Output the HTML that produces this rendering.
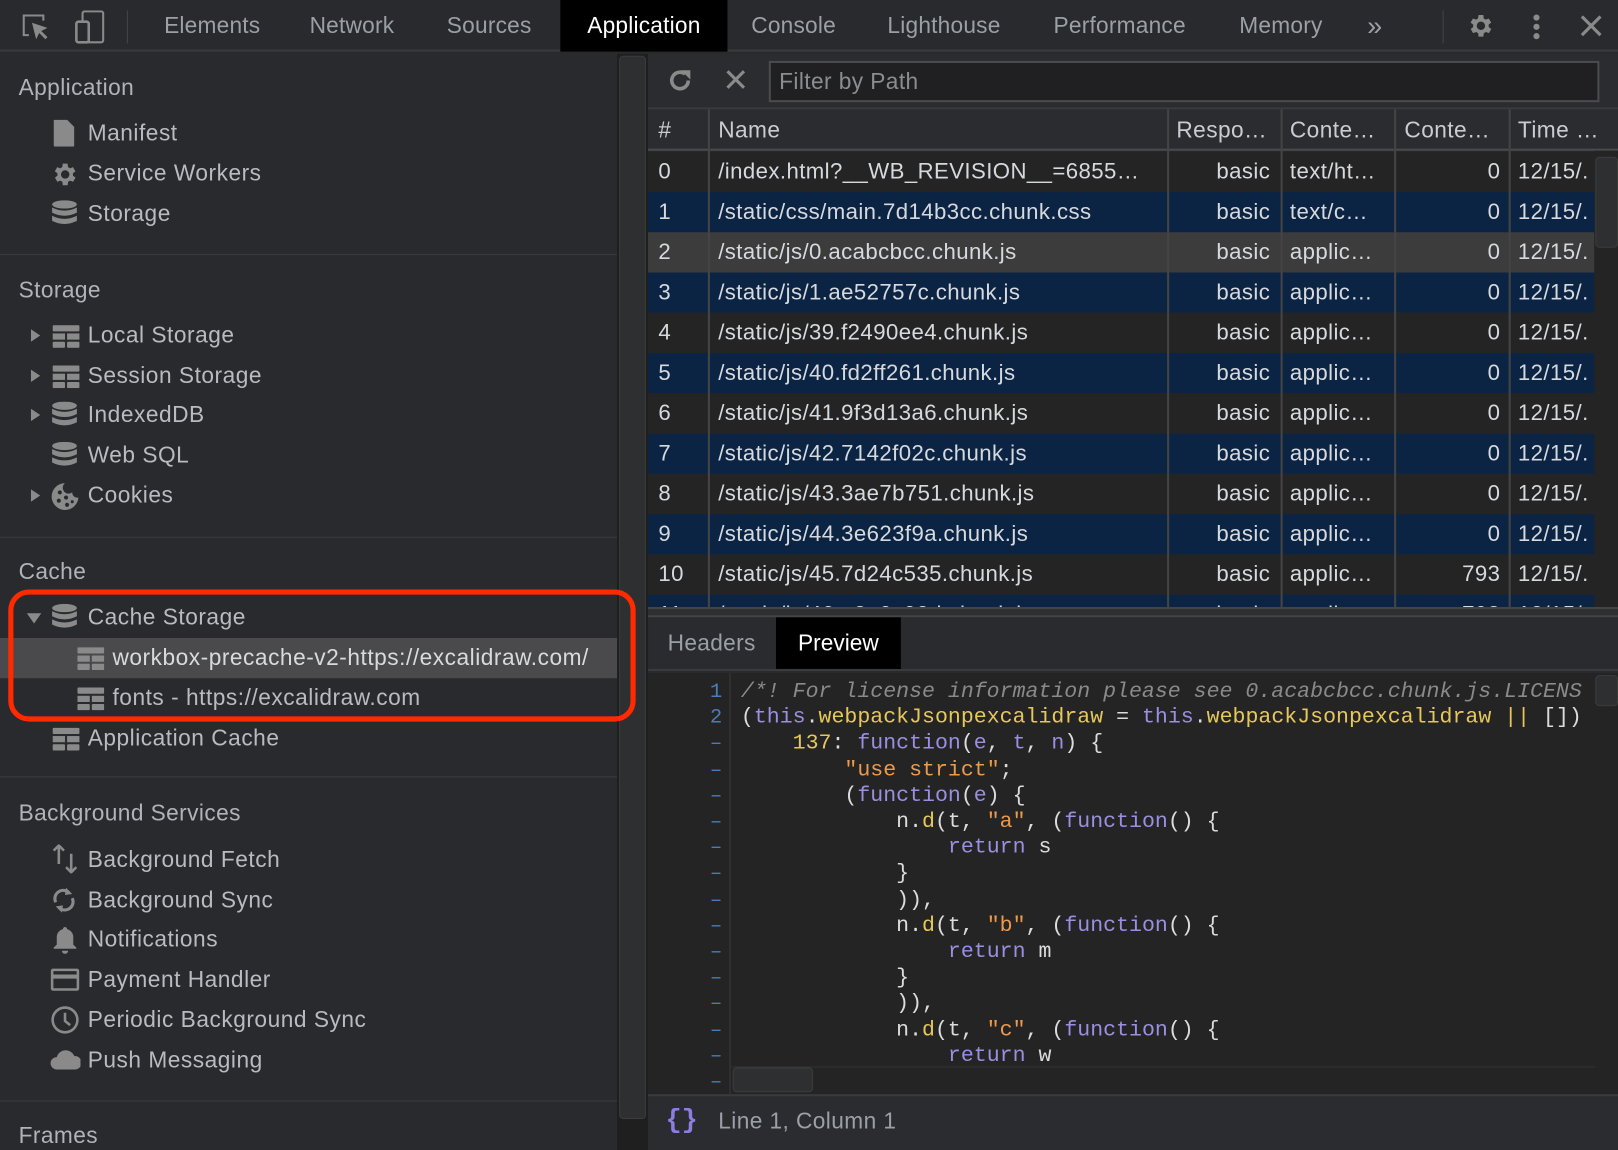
<!DOCTYPE html>
<html><head><meta charset="utf-8"><style>
*{margin:0;padding:0;box-sizing:border-box}
html,body{width:1618px;height:1150px;overflow:hidden;background:#292a2d}
#w{position:absolute;left:0;top:0;width:1568px;height:1114px;transform:scale(1.03189,1.03232);transform-origin:0 0;font-family:"Liberation Sans",sans-serif;color:#c4c7cc;background:#292a2d}
.a{position:absolute}
.tab{position:absolute;top:0;height:50px;line-height:50px;font-size:22px;color:#9aa0a6;letter-spacing:0.2px}
.hd{position:absolute;left:18px;font-size:22px;color:#b0b3b8;letter-spacing:0.4px}
.it{position:absolute;left:85px;font-size:22px;color:#b8bbbf;white-space:nowrap;letter-spacing:0.5px}
.ic{position:absolute}
.sep{position:absolute;left:0;width:598px;height:1px;background:#3a3b3e}
.tri{position:absolute;width:0;height:0;border-top:6px solid transparent;border-bottom:6px solid transparent;border-left:9px solid #8a8a8a}
.row{position:absolute;left:628px;width:917px;height:39px;font-size:21.5px;line-height:39px;color:#d6d9dd;letter-spacing:0.4px}
.row span{position:absolute;top:0;white-space:nowrap;overflow:hidden}
.code{position:absolute;left:718px;font-family:"Liberation Mono","DejaVu Sans Mono",monospace;font-size:20.9px;color:#dcdcdc;white-space:pre;line-height:25.2px}
.ln{position:absolute;left:628px;width:72px;text-align:right;font-family:"Liberation Mono",monospace;font-size:20px;color:#4a7db5;line-height:25.2px}
.k{color:#9a8fe0}.y{color:#e6c85a}.s{color:#ed9a4c}.c{color:#8a8a8a;font-style:italic}
</style></head><body><div id="w">
<div class="a" style="left:0;top:0;width:1568px;height:50px;background:#292a2d;border-bottom:2px solid #3a3b3e"></div>
<svg class="a" style="left:20px;top:12px" width="30" height="30" viewBox="0 0 30 30"><path d="M8 22H3V3h19v5" fill="none" stroke="#8a8a8a" stroke-width="2"/><path d="M11 10l4 16 3-6 6 6 2-2-6-6 6-3z" fill="#8a8a8a"/></svg>
<svg class="a" style="left:72px;top:10px" width="32" height="34" viewBox="0 0 32 34"><rect x="8" y="1" width="20" height="30" rx="2" fill="none" stroke="#8a8a8a" stroke-width="2"/><rect x="2" y="11" width="12" height="20" rx="2" fill="#292a2d" stroke="#8a8a8a" stroke-width="2.5"/></svg>
<div class="a" style="left:123px;top:10px;width:1px;height:32px;background:#444"></div>
<div class="tab" style="left:159px">Elements</div>
<div class="tab" style="left:300px">Network</div>
<div class="tab" style="left:433px">Sources</div>
<div class="tab" style="left:543px;width:162px;background:#000;color:#fff;text-align:center">Application</div>
<div class="tab" style="left:728px">Console</div>
<div class="tab" style="left:860px">Lighthouse</div>
<div class="tab" style="left:1021px">Performance</div>
<div class="tab" style="left:1201px">Memory</div>
<div class="tab" style="left:1325px;font-size:26px">»</div>
<div class="a" style="left:1398px;top:10px;width:1px;height:32px;background:#444"></div>
<svg class="a" style="left:1420px;top:11px" width="28" height="28" viewBox="0 0 24 24"><path fill="#8a8a8a" d="M19.4 13a7.5 7.5 0 000-2l2.1-1.6-2-3.5-2.5 1a7 7 0 00-1.7-1L15 3h-4l-.4 2.9a7 7 0 00-1.7 1l-2.5-1-2 3.5L6.6 11a7.5 7.5 0 000 2l-2.1 1.6 2 3.5 2.5-1a7 7 0 001.7 1L11 21h4l.4-2.9a7 7 0 001.7-1l2.5 1 2-3.5zM13 15.5a3.5 3.5 0 110-7 3.5 3.5 0 010 7z"/></svg>
<div class="a" style="left:1486px;top:14px;width:6px;height:6px;border-radius:3px;background:#8a8a8a;box-shadow:0 9px 0 #8a8a8a,0 18px 0 #8a8a8a"></div>
<svg class="a" style="left:1531px;top:14px" width="22" height="22" viewBox="0 0 22 22"><path d="M2 2l18 18M20 2L2 20" stroke="#8a8a8a" stroke-width="3"/></svg>

<div class="hd" style="top:72px">Application</div>
<svg class="ic" style="left:52px;top:116px" width="20" height="26" viewBox="0 0 20 26"><path d="M0 1q0-1 1-1h12l7 7v18q0 1-1 1H1q-1 0-1-1z" fill="#8a8a8a"/></svg>
<div class="it" style="top:116px">Manifest</div>
<svg class="ic" style="left:48px;top:155px" width="28" height="28" viewBox="0 0 24 24"><path fill="#8a8a8a" d="M19.4 13a7.5 7.5 0 000-2l2.1-1.6-2-3.5-2.5 1a7 7 0 00-1.7-1L15 3h-4l-.4 2.9a7 7 0 00-1.7 1l-2.5-1-2 3.5L6.6 11a7.5 7.5 0 000 2l-2.1 1.6 2 3.5 2.5-1a7 7 0 001.7 1L11 21h4l.4-2.9a7 7 0 001.7-1l2.5 1 2-3.5zM13 15.5a3.5 3.5 0 110-7 3.5 3.5 0 010 7z"/></svg>
<div class="it" style="top:155px">Service Workers</div>
<svg class="ic" style="left:50px;top:194px" width="25" height="27" viewBox="0 0 25 27"><g fill="#8a8a8a"><ellipse cx="12.5" cy="4" rx="12" ry="4"/><path d="M.5 7q12 6 24 0v5q-12 6-24 0zM.5 15q12 6 24 0v5q-12 6-24 0z"/></g></svg>
<div class="it" style="top:194px">Storage</div>
<div class="sep" style="top:246px"></div>

<div class="hd" style="top:268px">Storage</div>
<div class="tri" style="left:30px;top:319px"></div>
<svg class="ic" style="left:51px;top:315px" width="26" height="22" viewBox="0 0 26 22"><g fill="#8a8a8a"><rect x="0" y="0" width="26" height="6" rx="1"/><rect x="0" y="8" width="12" height="6"/><rect x="14" y="8" width="12" height="6"/><rect x="0" y="16" width="12" height="6" rx="1"/><rect x="14" y="16" width="12" height="6" rx="1"/></g></svg>
<div class="it" style="top:312px">Local Storage</div>
<div class="tri" style="left:30px;top:358px"></div>
<svg class="ic" style="left:51px;top:354px" width="26" height="22" viewBox="0 0 26 22"><g fill="#8a8a8a"><rect x="0" y="0" width="26" height="6" rx="1"/><rect x="0" y="8" width="12" height="6"/><rect x="14" y="8" width="12" height="6"/><rect x="0" y="16" width="12" height="6" rx="1"/><rect x="14" y="16" width="12" height="6" rx="1"/></g></svg>
<div class="it" style="top:351px">Session Storage</div>
<div class="tri" style="left:30px;top:396px"></div>
<svg class="ic" style="left:50px;top:389px" width="25" height="27" viewBox="0 0 25 27"><g fill="#8a8a8a"><ellipse cx="12.5" cy="4" rx="12" ry="4"/><path d="M.5 7q12 6 24 0v5q-12 6-24 0zM.5 15q12 6 24 0v5q-12 6-24 0z"/></g></svg>
<div class="it" style="top:389px">IndexedDB</div>
<svg class="ic" style="left:50px;top:428px" width="25" height="27" viewBox="0 0 25 27"><g fill="#8a8a8a"><ellipse cx="12.5" cy="4" rx="12" ry="4"/><path d="M.5 7q12 6 24 0v5q-12 6-24 0zM.5 15q12 6 24 0v5q-12 6-24 0z"/></g></svg>
<div class="it" style="top:428px">Web SQL</div>
<div class="tri" style="left:30px;top:474px"></div>
<svg class="ic" style="left:49px;top:467px" width="28" height="28" viewBox="0 0 28 28"><path d="M14 1a13 13 0 1013 14 5 5 0 01-6-5 5 5 0 01-7-9z" fill="#8a8a8a"/><g fill="#292a2d"><circle cx="9" cy="10" r="2"/><circle cx="8" cy="18" r="2"/><circle cx="15" cy="15" r="2"/><circle cx="16" cy="22" r="2"/><circle cx="21" cy="19" r="1.5"/></g></svg>
<div class="it" style="top:467px">Cookies</div>
<div class="sep" style="top:520px"></div>

<div class="hd" style="top:541px">Cache</div>
<div class="a" style="left:0;top:618px;width:598px;height:39px;background:#4a4a4c"></div>
<div class="a" style="left:26px;top:594px;width:0;height:0;border-left:7px solid transparent;border-right:7px solid transparent;border-top:10px solid #8a8a8a"></div>
<svg class="ic" style="left:50px;top:585px" width="25" height="27" viewBox="0 0 25 27"><g fill="#8a8a8a"><ellipse cx="12.5" cy="4" rx="12" ry="4"/><path d="M.5 7q12 6 24 0v5q-12 6-24 0zM.5 15q12 6 24 0v5q-12 6-24 0z"/></g></svg>
<div class="it" style="top:585px">Cache Storage</div>
<svg class="ic" style="left:75px;top:627px" width="26" height="22" viewBox="0 0 26 22"><g fill="#8a8a8a"><rect x="0" y="0" width="26" height="6" rx="1"/><rect x="0" y="8" width="12" height="6"/><rect x="14" y="8" width="12" height="6"/><rect x="0" y="16" width="12" height="6" rx="1"/><rect x="14" y="16" width="12" height="6" rx="1"/></g></svg>
<div class="it" style="top:624px;left:109px;color:#d8dadd">workbox-precache-v2-https://excalidraw.com/</div>
<svg class="ic" style="left:75px;top:666px" width="26" height="22" viewBox="0 0 26 22"><g fill="#8a8a8a"><rect x="0" y="0" width="26" height="6" rx="1"/><rect x="0" y="8" width="12" height="6"/><rect x="14" y="8" width="12" height="6"/><rect x="0" y="16" width="12" height="6" rx="1"/><rect x="14" y="16" width="12" height="6" rx="1"/></g></svg>
<div class="it" style="top:663px;left:109px">fonts - https://excalidraw.com</div>
<svg class="ic" style="left:51px;top:705px" width="26" height="22" viewBox="0 0 26 22"><g fill="#8a8a8a"><rect x="0" y="0" width="26" height="6" rx="1"/><rect x="0" y="8" width="12" height="6"/><rect x="14" y="8" width="12" height="6"/><rect x="0" y="16" width="12" height="6" rx="1"/><rect x="14" y="16" width="12" height="6" rx="1"/></g></svg>
<div class="it" style="top:702px">Application Cache</div>
<div class="sep" style="top:752px"></div>

<div class="hd" style="top:775px">Background Services</div>
<svg class="ic" style="left:50px;top:818px" width="26" height="28" viewBox="0 0 26 28"><path d="M7 1v18M2 6l5-5 5 5M19 9v18M14 22l5 5 5-5" fill="none" stroke="#8a8a8a" stroke-width="2.5"/></svg>
<div class="it" style="top:820px">Background Fetch</div>
<svg class="ic" style="left:50px;top:858px" width="24" height="28" viewBox="0 0 24 28"><path d="M4 16a8 8 0 0113-9M20 12a8 8 0 01-13 9" fill="none" stroke="#8a8a8a" stroke-width="3"/><path d="M14 2l6 6-7 1zM10 26l-6-6 7-1z" fill="#8a8a8a"/></svg>
<div class="it" style="top:859px">Background Sync</div>
<svg class="ic" style="left:51px;top:896px" width="24" height="28" viewBox="0 0 24 28"><path d="M12 2a2 2 0 012 2 8 8 0 016 8v7l3 3v1H1v-1l3-3v-7a8 8 0 016-8 2 2 0 012-2zM9 25h6a3 3 0 01-6 0z" fill="#8a8a8a"/></svg>
<div class="it" style="top:897px">Notifications</div>
<svg class="ic" style="left:49px;top:937px" width="28" height="24" viewBox="0 0 28 24"><rect x="1.5" y="2.5" width="25" height="19" rx="1" fill="none" stroke="#8a8a8a" stroke-width="2.5"/><rect x="1" y="7" width="26" height="4" fill="#8a8a8a"/></svg>
<div class="it" style="top:936px">Payment Handler</div>
<svg class="ic" style="left:49px;top:974px" width="28" height="28" viewBox="0 0 28 28"><circle cx="14" cy="14" r="12" fill="none" stroke="#8a8a8a" stroke-width="2.5"/><path d="M14 7v8l5 4" fill="none" stroke="#8a8a8a" stroke-width="2.5"/></svg>
<div class="it" style="top:975px">Periodic Background Sync</div>
<svg class="ic" style="left:48px;top:1016px" width="30" height="22" viewBox="0 0 30 22"><path d="M7 20a6 6 0 010-12 9 9 0 0117-1 6.5 6.5 0 011 13z" fill="#8a8a8a"/></svg>
<div class="it" style="top:1014px">Push Messaging</div>
<div class="sep" style="top:1066px"></div>
<div class="hd" style="top:1087px">Frames</div>

<div class="a" style="left:598px;top:52px;width:30px;height:1062px;background:#1f1f1f"></div>
<div class="a" style="left:600px;top:54px;width:26px;height:1030px;background:#2e2f31;border:1px solid #3c3c3c;border-radius:4px"></div>
<div class="a" style="left:8px;top:571px;width:608px;height:128px;border:5px solid #ff2a00;border-radius:20px"></div>

<div class="a" style="left:628px;top:52px;width:940px;height:54px;background:#2b2c2f;border-bottom:2px solid #3a3b3e"></div>
<svg class="a" style="left:646px;top:65px" width="26" height="26" viewBox="0 0 26 26"><path d="M21 13a8 8 0 11-3-6.3" fill="none" stroke="#8a8a8a" stroke-width="3.5"/><path d="M14 3h9v9z" fill="#8a8a8a"/></svg>
<svg class="a" style="left:703px;top:67px" width="20" height="20" viewBox="0 0 20 20"><path d="M2 2l16 16M18 2L2 18" stroke="#8a8a8a" stroke-width="3"/></svg>
<div class="a" style="left:745px;top:59px;width:805px;height:40px;background:#202022;border:2px solid #4a4b4e;font-size:22px;color:#8a8d91;line-height:36px;padding-left:8px;letter-spacing:0.4px">Filter by Path</div>

<div class="a" style="left:628px;top:106px;width:940px;height:40px;background:#2b2c2f;border-bottom:2px solid #4a4b4e;font-size:22px;line-height:40px;color:#c9ccd0;letter-spacing:0.4px">
<span class="a" style="left:10px">#</span><span class="a" style="left:68px">Name</span><span class="a" style="left:512px">Respo…</span><span class="a" style="left:622px">Conte…</span><span class="a" style="left:733px">Conte…</span><span class="a" style="left:843px">Time …</span></div>
<div id="rows"></div>
<div class="a" style="left:1545px;top:146px;width:23px;height:442px;background:#242424"></div>
<div class="a" style="left:1546px;top:152px;width:22px;height:88px;background:#2e2f31;border:1px solid #3c3c3c;border-radius:4px"></div>
<div class="a" style="left:628px;top:588px;width:940px;height:10px;background:#2e2f31;border-top:2px solid #444;border-bottom:2px solid #444"></div>

<div class="a" style="left:628px;top:598px;width:940px;height:52px;background:#2a2b2e;border-bottom:2px solid #3a3b3e"></div>
<div class="a" style="left:647px;top:598px;height:50px;line-height:50px;font-size:22px;color:#9aa0a6;letter-spacing:0.3px">Headers</div>
<div class="a" style="left:752px;top:598px;width:121px;height:50px;line-height:50px;font-size:22px;color:#fff;background:#000;text-align:center">Preview</div>

<div class="a" style="left:628px;top:652px;width:940px;height:408px;background:#242424"></div>
<div class="a" style="left:707px;top:652px;width:1px;height:408px;background:#3a3a3a"></div>
<div class="ln" style="top:658px">1<br>2<br>–<br>–<br>–<br>–<br>–<br>–<br>–<br>–<br>–<br>–<br>–<br>–<br>–<br>–</div>
<div class="code" style="top:658px"><span class="c">/*! For license information please see 0.acabcbcc.chunk.js.LICENS</span>
(<span class="k">this</span>.<span class="y">webpackJsonpexcalidraw</span> = <span class="k">this</span>.<span class="y">webpackJsonpexcalidraw</span> <span class="y">||</span> [])
    <span class="y">137</span>: <span class="k">function</span>(<span class="k">e</span>, <span class="k">t</span>, <span class="k">n</span>) {
        <span class="s">"use strict"</span>;
        (<span class="k">function</span>(<span class="k">e</span>) {
            n.<span class="y">d</span>(t, <span class="s">"a"</span>, (<span class="k">function</span>() {
                <span class="k">return</span> s
            }
            )),
            n.<span class="y">d</span>(t, <span class="s">"b"</span>, (<span class="k">function</span>() {
                <span class="k">return</span> m
            }
            )),
            n.<span class="y">d</span>(t, <span class="s">"c"</span>, (<span class="k">function</span>() {
                <span class="k">return</span> w</div>
<div class="a" style="left:1546px;top:652px;width:22px;height:408px;background:#242424"></div>
<div class="a" style="left:1546px;top:654px;width:22px;height:30px;background:#2e2f31;border:1px solid #3c3c3c;border-radius:4px"></div>
<div class="a" style="left:708px;top:1033px;width:838px;height:27px;background:#242424;border-top:1px solid #333"></div>
<div class="a" style="left:710px;top:1034px;width:78px;height:24px;background:#2e2f31;border:1px solid #3c3c3c;border-radius:4px"></div>

<div class="a" style="left:628px;top:1060px;width:940px;height:54px;background:#2b2c2f;border-top:2px solid #3a3b3e"></div>
<div class="a" style="left:645px;top:1070px;font-size:26px;color:#8c7ee0;font-family:'Liberation Mono',monospace;font-weight:bold">{}</div>
<div class="a" style="left:696px;top:1073px;font-size:22px;color:#9aa0a6;letter-spacing:0.4px">Line 1, Column 1</div>
</div>
<script>
var d=[["0","/index.html?__WB_REVISION__=6855…","text/ht…","0"],["1","/static/css/main.7d14b3cc.chunk.css","text/c…","0"],["2","/static/js/0.acabcbcc.chunk.js","applic…","0"],["3","/static/js/1.ae52757c.chunk.js","applic…","0"],["4","/static/js/39.f2490ee4.chunk.js","applic…","0"],["5","/static/js/40.fd2ff261.chunk.js","applic…","0"],["6","/static/js/41.9f3d13a6.chunk.js","applic…","0"],["7","/static/js/42.7142f02c.chunk.js","applic…","0"],["8","/static/js/43.3ae7b751.chunk.js","applic…","0"],["9","/static/js/44.3e623f9a.chunk.js","applic…","0"],["10","/static/js/45.7d24c535.chunk.js","applic…","793"],["11","/static/js/46.a3e0c02d.chunk.js","applic…","793"]];
var h="";
d.forEach(function(r,i){var top=147+i*39;var hgt=i==11?441-11*39:39;var bg=i==2?"#3c3c3c":(i%2?"#0c2443":"#242424");
h+='<div class="row" style="top:'+top+'px;height:'+hgt+'px;background:'+bg+';overflow:hidden"><span style="left:10px">'+r[0]+'</span><span style="left:68px;width:436px">'+r[1]+'</span><span style="left:503px;width:100px;text-align:right">basic</span><span style="left:622px;width:104px">'+r[2]+'</span><span style="left:723px;width:103px;text-align:right">'+r[3]+'</span><span style="left:843px">12/15/.</span></div>';});
[686,1131,1241,1351,1462].forEach(function(x){h+='<div class="a" style="left:'+x+'px;top:106px;width:2px;height:482px;background:#444"></div>';});
document.getElementById("rows").innerHTML=h;
</script>
</body></html>
